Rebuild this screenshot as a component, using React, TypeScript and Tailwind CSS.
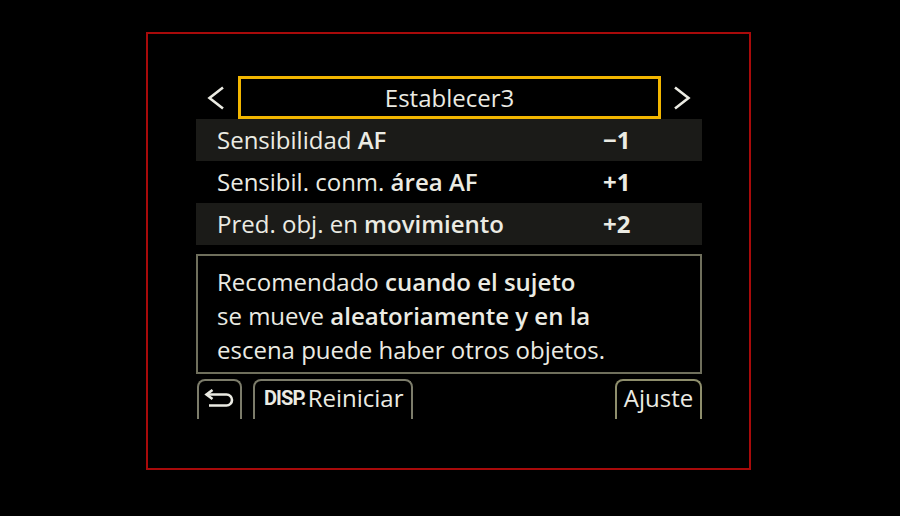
import React from "react";

const font = { fontFamily: '"Open Sans", "Noto Sans", sans-serif' };

function Chevron({ dir }: { dir: "left" | "right" }) {
  return (
    <svg viewBox="0 0 18 24" className="w-[18px] h-[24px]" aria-hidden>
      <path
        d={dir === "left" ? "M16 1.5 L2.5 12 L16 22.5" : "M2 1.5 L15.5 12 L2 22.5"}
        fill="none"
        stroke="#ebebe3"
        strokeWidth="2.6"
        strokeLinejoin="miter"
      />
    </svg>
  );
}

function BackIcon() {
  return (
    <svg viewBox="0 0 32 18" className="w-[32px] h-[18px]" aria-hidden>
      <path d="M3 5.5 H22.5 A5.5 5.5 0 0 1 22.5 16.5 H5" fill="none" stroke="#ebebe3" strokeWidth="2.6" />
      <path d="M8.5 1 L2.5 5.5 L8.5 10" fill="none" stroke="#ebebe3" strokeWidth="2.6" />
    </svg>
  );
}

const rows = [
  { label: <>Sensibilidad <span className="font-semibold">AF</span></>, value: "−1", shaded: true },
  { label: <>Sensibil. conm. <span className="font-semibold">área AF</span></>, value: "+1", shaded: false },
  { label: <>Pred. obj. en <span className="font-semibold">movimiento</span></>, value: "+2", shaded: true },
];

export default function App() {
  return (
    <div className="w-[900px] h-[516px] bg-black pt-[32px] pl-[146px] text-[#ebebe3]" style={font}>
      <div className="w-[605px] h-[438px] border-2 border-[#a80a0a] pl-[48px] pt-[42px]">
        <div className="w-[506px] flex flex-col">
          {/* title */}
          <div className="flex items-center h-[43px]">
            <div className="ml-[11px]"><Chevron dir="left" /></div>
            <div className="ml-[13px] w-[423px] h-[43px] border-[3px] border-[#f2b600] flex items-center justify-center text-[24px] leading-none">
              Establecer3
            </div>
            <div className="ml-[12px]"><Chevron dir="right" /></div>
          </div>

          {/* rows */}
          {rows.map((r, i) => (
            <div
              key={i}
              className={`h-[42px] flex items-center pl-[21px] text-[24px] ${r.shaded ? "bg-[#1b1b18]" : ""}`}
            >
              <div className="w-[386px]">{r.label}</div>
              <div className="font-bold">{r.value}</div>
            </div>
          ))}

          {/* description */}
          <div className="mt-[9px] h-[120px] border-2 border-[#6f6f5c] pl-[19px] pt-[9px] text-[24px] leading-[34px]">
            <div>Recomendado <span className="font-semibold">cuando el sujeto</span></div>
            <div>se mueve <span className="font-semibold">aleatoriamente y en la</span></div>
            <div>escena puede haber otros objetos.</div>
          </div>

          {/* buttons */}
          <div className="mt-[5px] h-[40px] flex">
            <div className="ml-[1px] w-[45px] h-[40px] border-2 border-b-0 border-[#7c7c6a] rounded-t-[8px] flex items-center justify-center pb-[4px]">
              <BackIcon />
            </div>
            <div className="ml-[11px] w-[160px] h-[40px] border-2 border-b-0 border-[#7c7c6a] rounded-t-[8px] flex items-center pl-[9px] pb-[4px]">
              <span className="font-bold text-[20px] tracking-[-0.9px] mr-[2px]" style={{ fontFamily: "Roboto, sans-serif" }}>DISP.</span>
              <span className="text-[24px]">Reiniciar</span>
            </div>
            <div className="ml-auto w-[87px] h-[40px] border-2 border-b-0 border-[#8e8e6c] rounded-t-[8px] flex items-center justify-center pb-[4px] text-[24px]">
              Ajuste
            </div>
          </div>
        </div>
      </div>
    </div>
  );
}
